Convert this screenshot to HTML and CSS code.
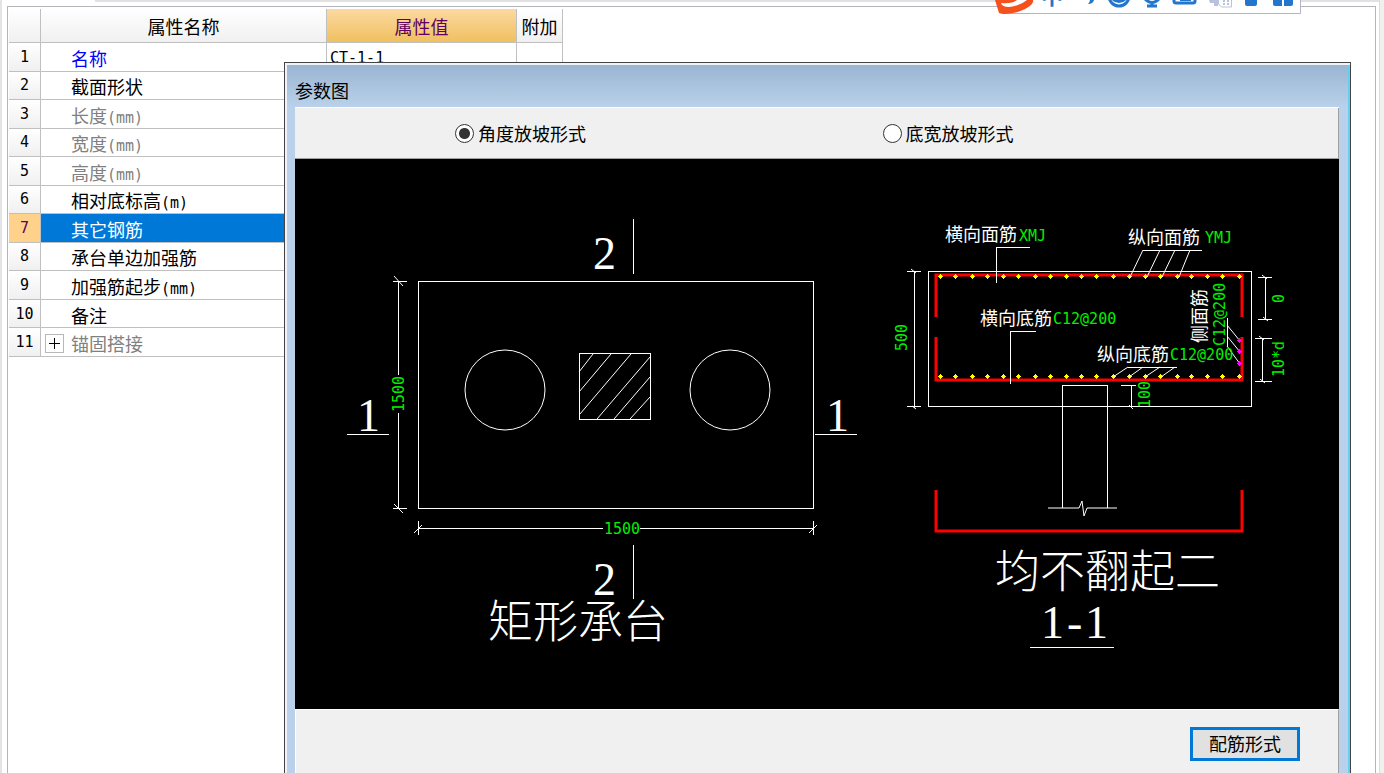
FILE: index.html
```html
<!DOCTYPE html>
<html lang="zh">
<head>
  <meta charset="UTF-8">
  <meta name="viewport" content="width=device-width, initial-scale=1.0">
  <title>属性编辑 - 参数图</title>
  <link rel="stylesheet" href="styles.css">
</head>
<body>
  <div class="page">
    <div class="panel">
      <table class="props">
        <colgroup>
          <col class="col-num">
          <col class="col-name">
          <col class="col-value">
          <col class="col-extra">
        </colgroup>
        <thead>
          <tr><th></th><th>属性名称</th><th class="current">属性值</th><th>附加</th></tr>
        </thead>
        <tbody>
          <tr><th>1</th><td class="key">名称</td><td class="value">CT-1-1</td><td></td></tr>
          <tr><th>2</th><td>截面形状</td><td></td><td></td></tr>
          <tr class="muted"><th>3</th><td>长度<span>(mm)</span></td><td></td><td></td></tr>
          <tr class="muted"><th>4</th><td>宽度<span>(mm)</span></td><td></td><td></td></tr>
          <tr class="muted"><th>5</th><td>高度<span>(mm)</span></td><td></td><td></td></tr>
          <tr><th>6</th><td>相对底标高<span>(m)</span></td><td></td><td></td></tr>
          <tr class="selected"><th>7</th><td>其它钢筋</td><td></td><td></td></tr>
          <tr><th>8</th><td>承台单边加强筋</td><td></td><td></td></tr>
          <tr><th>9</th><td>加强筋起步<span>(mm)</span></td><td></td><td></td></tr>
          <tr><th>10</th><td>备注</td><td></td><td></td></tr>
          <tr class="muted group"><th>11</th><td><div class="group-name"><button type="button" class="expand" aria-label="展开"></button>锚固搭接</div></td><td></td><td></td></tr>
        </tbody>
      </table>
    </div>
  </div>

  <!-- 输入法工具条 -->
  <div class="ime">
    <svg width="306" height="14" viewBox="995 0 306 14">
      <path fill="#fff" d="M1001 0h299v13h-299z"/>
      <path fill="none" stroke="#b4b4c4" d="M1003 13.500h297.500v-14"/>
      <path fill="#f4511e" d="M995 0L999 13Q1001 14 1005 14Q1022 13 1031 5Q1034 2 1033 0Z"/>
      <path fill="#fff" d="M1001 3Q1012 4 1017 0H1027Q1020 6 1009 7Q1002 7 1001 3Z"/>
      <text class="ime-mode" x="1041" y="4">中</text>
      <path fill="#2277cc" d="M1090 0h4q-1 4-6 4q2-2 2-4z"/>
      <g fill="none" stroke="#2277cc" stroke-width="3">
        <circle cx="1119" cy="-4" r="10"/>
        <path d="M1113-1q6 5 12 0"/>
        <path d="M1145-1q7 7 14 0M1152 2v4M1147 6h10"/>
        <path d="M1174-6v7q0 2 2 2h17q2 0 2-2v-7"/>
        <path stroke-width="2" d="M1180 0h11"/>
      </g>
      <path fill="#b8c2dc" d="M1209 0h9v6h-4v-3h-4z"/>
      <path fill="#fff" stroke="#b8c2dc" d="M1218.500-1h13v8h-10l-3-3z"/>
      <path stroke="#b8c2dc" stroke-width="2" stroke-dasharray="2 1" d="M1224 0v6M1228 0v6"/>
      <path fill="#2277cc" d="M1245-2h12v6q0 2-2 2h-8q-2 0-2-2zM1273-2h9v8h-7q-2 0-2-2zM1284-2h9v6q0 2-2 2h-7z"/>
    </svg>
  </div>

  <div class="dialog" role="dialog" aria-labelledby="dialog-title">
    <div class="title" id="dialog-title">参数图</div>
    <div class="content">
      <form class="modes">
        <label><input type="radio" name="mode" checked>角度放坡形式</label>
        <label><input type="radio" name="mode">底宽放坡形式</label>
      </form>

      <svg class="drawing" viewBox="295 159 1044 550">
        <defs>
          <path id="dot" d="M-2 0h5v1h-5zM0-2h1v5h-1zM-1-1h3v3h-3z"/>
          <g id="bars">
            <use href="#dot" x="940"/><use href="#dot" x="955"/><use href="#dot" x="972"/><use href="#dot" x="987"/>
            <use href="#dot" x="1003"/><use href="#dot" x="1018"/><use href="#dot" x="1035"/><use href="#dot" x="1050"/>
            <use href="#dot" x="1066"/><use href="#dot" x="1081"/><use href="#dot" x="1096"/><use href="#dot" x="1113"/>
            <use href="#dot" x="1129"/><use href="#dot" x="1145"/><use href="#dot" x="1160"/><use href="#dot" x="1177"/>
            <use href="#dot" x="1191"/><use href="#dot" x="1207"/><use href="#dot" x="1222"/><use href="#dot" x="1239"/>
          </g>
        </defs>

        <!-- 平面图 -->
        <g class="line">
          <path d="M418 281H813V508H418Z"/>
          <path d="M579 353H650V419H579Z"/>
          <path d="M398 281V375M398 413V508M393 281H407M393 508H407"/>
          <path d="M418 528H603M640 528H813M418 521V535M813 521V535"/>
          <path d="M633 219V274M633 545V599M347 434H389M815 434H857"/>
        </g>
        <g class="thin">
          <circle cx="505" cy="390" r="40"/>
          <circle cx="730" cy="390" r="40"/>
          <path d="M593 354L579 372M611 354L579 392M631 354L580 414M650 357L597 419M650 377L614 419M650 397L630 419"/>
          <path d="M394 276L403 286M394 504L403 513M414 533L422 525M809 533L817 525"/>
        </g>
        <g class="big">
          <text x="593" y="269">2</text>
          <text x="593" y="595">2</text>
          <text x="357" y="431">1</text>
          <text x="826" y="431">1</text>
          <text class="han" x="488" y="638">矩形承台</text>
        </g>
        <g class="dim">
          <text x="604" y="534">1500</text>
          <text transform="translate(404 412) rotate(-90)">1500</text>
        </g>

        <!-- 1-1 剖面 -->
        <g class="line">
          <path d="M928 271H1251V406H928Z"/>
          <path d="M914 271V408M907 271H921M907 406H921"/>
          <path d="M1062 508V385H1107V508"/>
          <path d="M1265 277V319M1258 277H1272M1258 319H1272"/>
          <path d="M1262 338V381M1255 338H1272M1255 381H1272"/>
          <path d="M1131 385V407M1121 385H1136"/>
          <path d="M1030 647H1114"/>
        </g>
        <g class="rebar">
          <path d="M936 317V275H1242V317"/>
          <path d="M936 337V380H1242V337"/>
          <path d="M936 490V531H1242V490"/>
        </g>
        <g class="bar-dots">
          <use href="#bars" y="276"/>
          <use href="#bars" y="376"/>
        </g>
        <g class="line">
          <path d="M996 283V247H1030M1010 384V331H1036M1143 250H1202M1128 367H1177M1227 318V347"/>
        </g>
        <g class="thin">
          <path d="M1048 508H1079L1082 501L1084 516L1087 508H1117"/>
          <path d="M1143 250L1130 277M1160 250L1147 277M1175 250L1162 277M1190 250L1179 277"/>
          <path d="M1128 367L1113 377M1143 367L1129 377M1160 367L1145 377M1175 367L1161 377"/>
          <path d="M1227 325L1240 341M1227 336L1240 352M1227 346L1240 364"/>
          <path d="M911 269L916 273M912 406L916 409M1262 275L1267 279M1263 317L1268 321M1259 336L1264 340M1260 379L1265 383M1129 405L1133 409"/>
        </g>
        <g class="side-dots">
          <use href="#dot" x="1239" y="340"/>
          <use href="#dot" x="1239" y="351"/>
          <use href="#dot" x="1239" y="363"/>
        </g>
        <g class="note">
          <text x="945" y="241">横向面筋</text>
          <text x="1128" y="244">纵向面筋</text>
          <text x="980" y="325">横向底筋</text>
          <text x="1097" y="361">纵向底筋</text>
          <text transform="translate(1206 343) rotate(-90)">侧面筋</text>
        </g>
        <g class="dim">
          <text x="1019" y="241">XMJ</text>
          <text x="1205" y="243">YMJ</text>
          <text x="1053" y="324">C12@200</text>
          <text x="1170" y="360">C12@200</text>
          <text transform="translate(1225 346) rotate(-90)">C12@200</text>
          <text transform="translate(907 351) rotate(-90)">500</text>
          <text transform="translate(1284 303) rotate(-90)">0</text>
          <text transform="translate(1284 377) rotate(-90)">10*d</text>
          <text transform="translate(1150 408) rotate(-90)">100</text>
        </g>
        <g class="big">
          <text class="han" x="995" y="588">均不翻起二</text>
          <text x="1041 1067 1085" y="638">1-1</text>
        </g>
      </svg>

      <div class="footer">
        <button type="button" class="btn">配筋形式</button>
      </div>
    </div>
  </div>
</body>
</html>
```
FILE: styles.css
```css
* {
  margin: 0;
  padding: 0;
  box-sizing: border-box;
}
body {
  height: 100vh;
  position: relative;
  overflow: hidden;
  background-color: #f0f0f0;
  font-family: 'Noto Sans CJK SC', sans-serif;
  font-size: 18px;
  color: #000;
}
.page {
  position: relative;
  height: 100%;
  margin-right: 4px;
  padding: 6px 3px 0 5px;
  border-left: 2px solid #e4e4e4;
  border-right: 1px solid #dcdcdc;
  background-color: #fff;
}
.page::before {
  content: '';
  position: absolute;
  left: 93px;
  right: 0;
  top: 0;
  height: 2px;
  background-color: #e1e1e1;
}
.panel {
  height: 100%;
  padding: 2px 1px;
  border: 1px solid #b4b4ba;
  border-bottom: none;
}

/* 属性表 */
.props {
  width: 554px;
  height: 348px;
  table-layout: fixed;
  border-collapse: separate;
  border-spacing: 0;
}
.col-num {
  width: 32px;
}
.col-name {
  width: 286px;
}
.col-value {
  width: 190px;
}
.col-extra {
  width: 46px;
}
.props th, .props td {
  border-right: 1px solid #c0c0c0;
  border-bottom: 1px solid #c0c0c0;
  font-weight: normal;
  line-height: 24px;
  white-space: nowrap;
}
.props th {
  background: linear-gradient(#fff, #f0f0f0);
}
.props thead th {
  height: 34px;
}
.props thead .current {
  background: linear-gradient(#fbd9a0, #f0c060);
  color: #600060;
}
.props tbody tr {
  height: 28px;
}
.props tbody th, .props .value, .props span {
  font-family: 'DejaVu Sans Mono', monospace;
  font-size: 15px;
}
.props span {
  line-height: 16px;
}
.props td {
  padding: 2px 0 0 30px;
}
.props .value {
  padding-left: 3px;
}
.props .key {
  color: #00f;
}
.props .muted td {
  color: #808080;
}
.props .selected th {
  background: #ffd28c;
  color: #600060;
}
.props .selected td {
  background-color: #0078d7;
  color: #fff;
}
.props .group td {
  padding-left: 4px;
}
.group-name {
  display: flex;
  align-items: center;
  gap: 7px;
}
.expand {
  position: relative;
  width: 19px;
  height: 19px;
  border: 1px solid #b8b8b8;
  background-color: #fff;
}
.expand::before, .expand::after {
  content: '';
  position: absolute;
  left: 3px;
  top: 8px;
  width: 11px;
  height: 1px;
  background-color: #000;
}
.expand::after {
  transform: rotate(90deg);
}

/* 输入法 */
.ime {
  position: absolute;
  top: 0;
  right: 83px;
  height: 14px;
}
.ime svg {
  display: block;
}
.ime-mode {
  font-size: 22px;
  font-weight: bold;
  fill: #2277cc;
}

/* 参数图窗口 */
.dialog {
  position: absolute;
  left: 284px;
  right: 33px;
  top: 62px;
  bottom: 0;
  display: flex;
  flex-direction: column;
  padding: 0 11px 0 10px;
  border: 1px solid #444;
  border-bottom: none;
  background: linear-gradient(#99b4d1, #b9d1ea 44px);
  box-shadow: inset 2px 2px #f0f4f8, inset -2px 0 #62d0ee;
}
.title {
  height: 44px;
  padding: 14px 0 0;
  line-height: 26px;
}
.content {
  flex: 1;
  display: flex;
  flex-direction: column;
  border-top: 1px solid #fff;
  background-color: #f0f0f0;
}
.modes {
  display: grid;
  grid-template-columns: 1fr 1fr;
  align-items: center;
  height: 51px;
  padding: 0 28px 0 160px;
  border-right: 1px solid #a0a0a0;
  border-bottom: 1px solid #a0a0a0;
}
.modes label {
  display: flex;
  align-items: center;
  gap: 4px;
}
.modes input {
  appearance: none;
  width: 19px;
  height: 19px;
  border: 1px solid #333;
  border-radius: 50%;
  background-color: #fff;
}
.modes input:checked {
  background: radial-gradient(circle, #333 5px, #fff 6px);
}
.drawing {
  display: block;
  width: 100%;
  background-color: #000;
}
.footer {
  flex: 1;
  display: flex;
  justify-content: flex-end;
  align-items: flex-start;
  padding: 17px 38px 0 0;
  border-top: 1px solid #fff;
  border-left: 1px solid #fff;
  border-right: 1px solid #a0a0a0;
}
.btn {
  width: 110px;
  height: 34px;
  padding-bottom: 3px;
  border: 3px solid #0078d7;
  background-color: #e1e1e1;
  font-family: inherit;
  font-size: 18px;
  line-height: 24px;
  color: #000;
}

/* 图形 */
.line, .thin {
  fill: none;
  stroke: #fff;
  shape-rendering: crispEdges;
}
.thin {
  shape-rendering: auto;
}
.rebar {
  fill: none;
  stroke: #f00;
  stroke-width: 3;
}
.bar-dots {
  fill: #ff0;
}
.side-dots {
  fill: #f0f;
}
.big {
  font-family: 'Liberation Serif', serif;
  font-size: 46px;
  fill: #fff;
}
.big .han {
  font-family: 'Noto Sans CJK SC', sans-serif;
  font-size: 45px;
  font-weight: 300;
}
.note {
  font-size: 18px;
  fill: #fff;
}
.dim {
  font-family: 'DejaVu Sans Mono', monospace;
  font-size: 15px;
  fill: #00f000;
}
```
